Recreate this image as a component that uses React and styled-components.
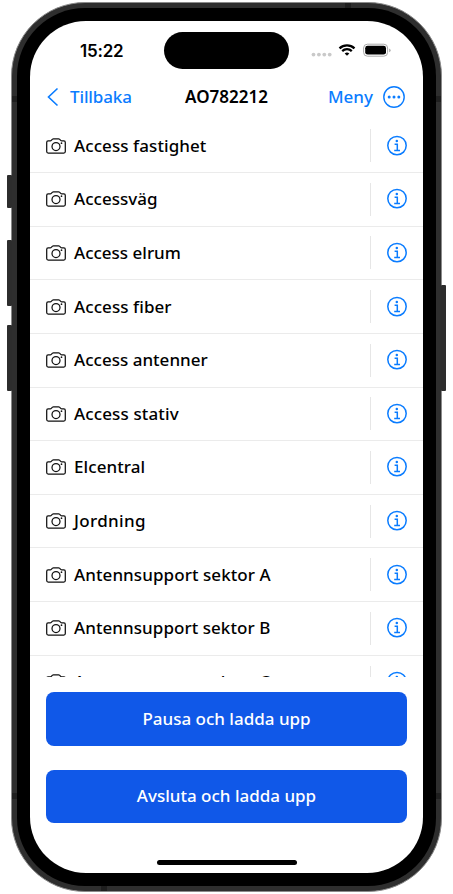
import React from "react";
import styled, { createGlobalStyle } from "styled-components";

const Global = createGlobalStyle`
  * { box-sizing: border-box; }
  body { margin: 0; background: #fff; font-family: "Noto Sans", sans-serif; }
`;

const Stage = styled.div`
  position: relative;
  width: 453px;
  height: 894px;
  overflow: hidden;
  padding: 2px 0 0 11px;
`;

const SideButton = styled.div`
  position: absolute;
  left: ${(p) => (p.$right ? 441 : 7)}px;
  top: ${(p) => p.$top}px;
  width: 5px;
  height: ${(p) => p.$height}px;
  border-radius: 1px;
  background: #2d2d2d;
`;

const Band = styled.div`
  position: absolute;
  left: ${(p) => p.$x}px;
  top: ${(p) => p.$y}px;
  width: ${(p) => (p.$flat ? 6 : 5)}px;
  height: ${(p) => (p.$flat ? 5 : 6)}px;
  background: #1f1f1f;
`;

const Frame = styled.div`
  width: 431px;
  height: 890px;
  border: 1px solid #8b8b8b;
  border-radius: 74px;
  background: #2e2e2e;
  padding: 5px;
`;

const Bezel = styled.div`
  width: 419px;
  height: 878px;
  border-radius: 68px;
  background: #000;
  padding: 13px;
`;

const Screen = styled.div`
  width: 393px;
  height: 852px;
  border-radius: 56px;
  background: #fff;
  overflow: hidden;
  display: flex;
  flex-direction: column;
`;

const StatusBar = styled.div`
  height: 59px;
  flex: none;
  display: grid;
  grid-template-columns: 134px 125px 134px;
`;

const Time = styled.div`
  font: 600 17px/20px Inter, sans-serif;
  letter-spacing: -0.2px;
  padding: 20px 0 0 50px;
`;

const Island = styled.div`
  width: 125px;
  height: 37px;
  margin-top: 11px;
  border-radius: 19px;
  background: #000;
`;

const StatusIcons = styled.svg`
  display: block;
  width: 90px;
  height: 24px;
  margin: 17px 0 0 15px;
`;

const NavBar = styled.div`
  height: 39.3px;
  flex: none;
  display: grid;
  grid-template-columns: 140px 113px 140px;
  padding-top: 5px;
`;

const NavGroup = styled.div`
  display: flex;
  height: 24px;
  align-items: center;
  gap: ${(p) => p.$gap}px;
  justify-content: ${(p) => p.$align};
  padding: 0 18px 0 17px;
  color: #0a7cff;
`;

const Label = styled.span`
  font-size: 17px;
  font-weight: ${(p) => p.$weight || 500};
  line-height: 24px;
  letter-spacing: ${(p) => p.$spacing || 0}px;
  white-space: nowrap;
`;

const Title = styled(Label)`
  font-weight: 600;
  text-align: center;
`;

const List = styled.div`
  height: 557.7px;
  flex: none;
  overflow: hidden;
`;

const Row = styled.div`
  height: 53.65px;
  display: flex;
  align-items: center;
  padding: 0 16px;
  border-bottom: 1px solid #ebebeb;
`;

const RowName = styled.div`
  flex: 1;
  display: flex;
  padding-left: 8px;
`;

const Divider = styled.div`
  width: 1px;
  height: 33px;
  margin-right: 16px;
  background: #e6e6e6;
`;

const Glyph = styled.svg`
  display: block;
  flex: none;
  overflow: visible;
`;

const Actions = styled.div`
  display: flex;
  flex-direction: column;
  gap: 23.7px;
  padding: 15.5px 16px 0;
  flex: 1;
`;

const Button = styled.button`
  height: 53.5px;
  border: 0;
  border-radius: 8px;
  background: #1058e8;
  color: #fff;
  font-family: inherit;
  padding: 0;
`;

const HomeBar = styled.div`
  width: 140px;
  height: 5px;
  margin: 0 auto 8px;
  border-radius: 3px;
  background: #000;
`;

const Camera = () => (
  <Glyph width="20" height="16" viewBox="0 0 20 16" fill="none" stroke="#111" strokeWidth="1.25">
    <path d="M.7 4.4c0-1 .5-1.5 1.4-1.5h2.1c.6 0 .9-.3 1.3-.8.5-.8 1-1.3 1.9-1.3h5.2c.9 0 1.4.5 1.9 1.3.4.5.7.8 1.3.8h2.1c.9 0 1.4.5 1.4 1.5v9.1c0 1-.5 1.5-1.5 1.5H2.2c-1 0-1.5-.5-1.5-1.5z" />
    <circle cx="10" cy="8.5" r="4" />
    <circle cx="15.5" cy="5.2" r=".85" fill="#111" stroke="none" />
  </Glyph>
);

const Info = () => (
  <Glyph width="20" height="20" viewBox="0 0.4 20 20" fill="none" stroke="#0a7cff" strokeWidth="1.5">
    <circle cx="10" cy="10" r="9.2" />
    <circle cx="9.8" cy="5.4" r="1.25" fill="#0a7cff" stroke="none" />
    <path d="M7.6 8.7h2.7v6M7.2 14.9h5.8" />
  </Glyph>
);

const rows = [
  ["Access fastighet", 0.08],
  ["Accessväg", 0.03],
  ["Access elrum", 0],
  ["Access fiber", 0.08],
  ["Access antenner", 0.02],
  ["Access stativ", 0.13],
  ["Elcentral", 0.08],
  ["Jordning", 0.35],
  ["Antennsupport sektor A", 0.08],
  ["Antennsupport sektor B", 0.06],
  ["Antennsupport sektor C", 0.06],
];

export default function App() {
  return (
    <Stage>
      <Global />
      <SideButton $top={175} $height={33} />
      <SideButton $top={240} $height={66} />
      <SideButton $top={325} $height={66} />
      <SideButton $right $top={285} $height={106} />
      <Frame>
        <Bezel>
          <Screen>
            <StatusBar>
              <Time>15:22</Time>
              <Island />
              <StatusIcons viewBox="0 0 90 24">
                <g fill="#c9c9c9">
                  <circle cx="9.5" cy="16.6" r="1.9" />
                  <circle cx="14.9" cy="16.6" r="1.9" />
                  <circle cx="20.3" cy="16.6" r="1.9" />
                  <circle cx="25.7" cy="16.6" r="1.9" />
                </g>
                <g fill="none" stroke="#000" strokeWidth="2.3">
                  <path d="M35.5 10.3a11 11 0 0 1 15 0M38.2 13.1a7 7 0 0 1 9.6 0" />
                  <path d="M43 17.8l-2.3-2.3a3.4 3.4 0 0 1 4.6 0z" fill="#000" stroke="none" />
                </g>
                <rect x="59.6" y="6.2" width="24" height="12" rx="3.8" fill="none" stroke="#aaa" />
                <rect x="61.2" y="7.8" width="20.8" height="8.8" rx="2.4" />
                <path d="M85.2 10.4a2 2 0 0 1 0 3.8z" fill="#aaa" />
              </StatusIcons>
            </StatusBar>
            <NavBar>
              <NavGroup $gap={11} $align="flex-start">
                <Glyph width="12" height="20" viewBox="0 0 12 20" fill="none" stroke="#0a7cff" strokeWidth="1.6">
                  <path d="M10.5 1.5L1.5 10l9 8.5" />
                </Glyph>
                <Label $spacing={-0.13}>Tillbaka</Label>
              </NavGroup>
              <Title>AO782212</Title>
              <NavGroup $gap={10} $align="flex-end">
                <Label>Meny</Label>
                <Glyph width="22" height="22" viewBox="0 0 22 22" fill="none" stroke="#0a7cff" strokeWidth="1.4">
                  <circle cx="11" cy="11" r="10.2" />
                  <g fill="#0a7cff" stroke="none">
                    <circle cx="6.2" cy="11" r="1.5" />
                    <circle cx="11" cy="11" r="1.5" />
                    <circle cx="15.8" cy="11" r="1.5" />
                  </g>
                </Glyph>
              </NavGroup>
            </NavBar>
            <List>
              {rows.map(([name, spacing]) => (
                <Row key={name}>
                  <Camera />
                  <RowName>
                    <Label $spacing={spacing}>{name}</Label>
                  </RowName>
                  <Divider />
                  <Info />
                </Row>
              ))}
            </List>
            <Actions>
              <Button><Label>Pausa och ladda upp</Label></Button>
              <Button><Label>Avsluta och ladda upp</Label></Button>
            </Actions>
            <HomeBar />
          </Screen>
        </Bezel>
      </Frame>
      <Band $x={12} $y={96} />
      <Band $x={436} $y={96} />
      <Band $x={12} $y={793} />
      <Band $x={436} $y={793} />
      <Band $flat $x={345} $y={3} />
      <Band $flat $x={101} $y={886} />
    </Stage>
  );
}
